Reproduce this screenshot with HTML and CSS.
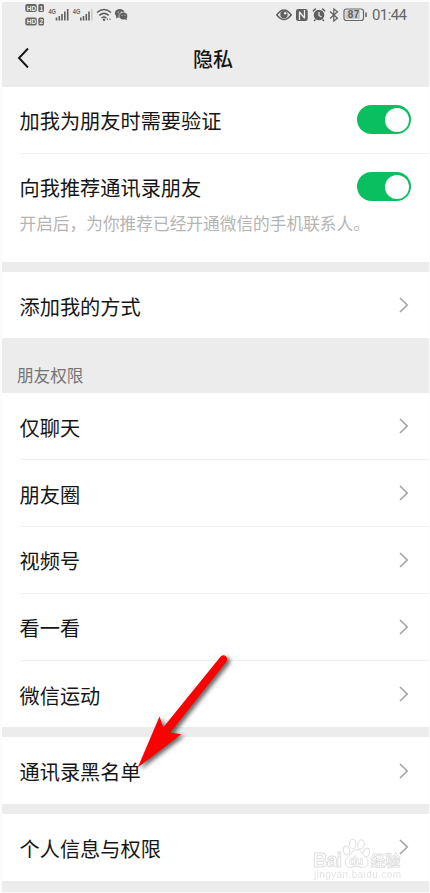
FILE: index.html
```html
<!DOCTYPE html>
<html lang="zh-CN">
<head>
<meta charset="utf-8">
<title>隐私</title>
<link rel="stylesheet" href="styles.css">
</head>
<body>
<svg class="defs" width="0" height="0"><defs>
<symbol id="chevron" viewBox="0 0 10 16"><path d="M1 1l7.200 7L1 15" fill="none" stroke="#a6a6a6" stroke-width="1.700"/></symbol>
</defs></svg>
<main class="screen">
  <header class="top">
    <div class="status">
      <svg width="106" height="24" viewBox="24 2 106 24">
        <g fill="#666">
          <rect x="25.300" y="4" width="11.500" height="8" rx="2"/><rect x="38.300" y="4" width="5.700" height="8" rx="1.500"/>
          <rect x="25.300" y="17.500" width="11.500" height="8" rx="2"/><rect x="38.300" y="17.500" width="5.700" height="8" rx="1.500"/>
        </g>
        <g class="hd" fill="#eee"><text x="26.700" y="10.500">HD</text><text x="39.500" y="10.500">1</text><text x="26.700" y="24">HD</text><text x="39.500" y="24">2</text></g>
        <g class="net" fill="#666"><text x="48.500" y="13.500" textLength="7.500" lengthAdjust="spacingAndGlyphs">4G</text><text x="72.800" y="13.500" textLength="7.500" lengthAdjust="spacingAndGlyphs">4G</text></g>
        <g stroke="#606060" stroke-width="1.600">
          <path d="M56.500 20.500v-3M59.300 20.500v-4.500M62 20.500v-6.500M64.800 20.500v-9M67.700 20.500V9"/>
          <path d="M80.800 20.500v-3M83.500 20.500v-4.500M86.300 20.500v-6.500M89 20.500v-9"/>
          <path d="M91.800 20.500V9" stroke="#ccc"/>
        </g>
        <g fill="none" stroke="#606060" stroke-width="1.600"><path d="M97 12.500q7-6 14 0M99.300 15.300q4.700-4 9.400 0M101.500 18q2.500-2 5 0"/></g>
        <circle cx="104" cy="19.700" r="1.200" fill="#606060"/>
        <path d="M108 18l-1.500 1.300 1.500 1.300zM109.500 18l1.500 1.300-1.500 1.300z" fill="#777"/>
        <g fill="#606060"><ellipse cx="119.800" cy="13.300" rx="4.900" ry="4.200"/><path d="M116.500 15.500l-.5 3 3-1.500z"/>
        <ellipse cx="123.300" cy="16" rx="4.400" ry="3.900" stroke="#ececec" stroke-width=".7"/><path d="M124 18.500l3 1.700-.5-3z"/></g>
        <g fill="#ececec"><circle cx="118.200" cy="12.200" r=".6"/><circle cx="121.300" cy="12.200" r=".6"/><circle cx="122" cy="15.300" r=".5"/><circle cx="125" cy="15.300" r=".5"/></g>
      </svg>
      <div class="status-right">
        <svg width="92" height="16" viewBox="276 7 92 16">
          <path d="M276.800 15Q284 5 291.200 15Q284 24 276.800 15Z" fill="none" stroke="#606060" stroke-width="1.500"/>
          <circle cx="284" cy="14.500" r="3.700" fill="#606060"/><circle cx="285.200" cy="13.300" r="1.300" fill="#eee"/>
          <rect x="296" y="9" width="11.700" height="12" rx="2.300" fill="#606060"/>
          <path d="M299.500 20v-8.500M299.500 12l5 6M304.500 10v8.500" fill="none" stroke="#eee" stroke-width="1.300"/>
          <circle cx="319" cy="15" r="5.300" fill="#606060"/><path d="M313 11.500q1-2 3-2.700M322 8.800q2 .7 3 2.700M315.500 19.500l-1.500 1.500M322.500 19.500l1.500 1.500" stroke="#606060" stroke-width="1.500" fill="none"/>
          <path d="M319 12v3.500l2.500 1.500" stroke="#eee" stroke-width="1.200" fill="none"/>
          <path d="M330 11.500l7.500 6.800-3.700 2.700V9l3.700 2.700-7.500 6.800" fill="none" stroke="#606060" stroke-width="1.200"/>
          <rect x="344" y="9" width="19.500" height="11.500" rx="2.500" fill="#eee" stroke="#686868" stroke-width="1.200"/>
          <rect x="345.500" y="10.500" width="14.500" height="8.500" rx="1" fill="#c8c8c8"/>
          <path d="M366 12.500v4.500" stroke="#686868" stroke-width="1.600"/>
          <text class="battery" x="347.700" y="18.300" textLength="11.500">87</text>
        </svg>
        <span class="time">01:44</span>
      </div>
    </div>
    <div class="nav">
      <svg class="back" width="12" height="22" viewBox="0 0 12 22"><path d="M11 1.500L2 11l9 9.500" fill="none" stroke="#151515" stroke-width="1.900"/></svg>
      <h1>隐私</h1>
    </div>
  </header>

  <section class="group">
    <div class="row"><span>加我为朋友时需要验证</span><i class="switch"></i></div>
    <div class="row detail">
      <div class="line"><span>向我推荐通讯录朋友</span><i class="switch"></i></div>
      <p>开启后，为你推荐已经开通微信的手机联系人。</p>
    </div>
  </section>
  <section class="group">
    <div class="row"><span>添加我的方式</span><svg class="chev"><use href="#chevron"/></svg></div>
  </section>
  <h2>朋友权限</h2>
  <section class="group">
    <div class="row"><span>仅聊天</span><svg class="chev"><use href="#chevron"/></svg></div>
    <div class="row"><span>朋友圈</span><svg class="chev"><use href="#chevron"/></svg></div>
    <div class="row"><span>视频号</span><svg class="chev"><use href="#chevron"/></svg></div>
    <div class="row"><span>看一看</span><svg class="chev"><use href="#chevron"/></svg></div>
    <div class="row"><span>微信运动</span><svg class="chev"><use href="#chevron"/></svg></div>
  </section>
  <section class="group">
    <div class="row"><span>通讯录黑名单</span><svg class="chev"><use href="#chevron"/></svg></div>
  </section>
  <section class="group">
    <div class="row"><span>个人信息与权限</span><svg class="chev"><use href="#chevron"/></svg></div>
  </section>
</main>

<svg class="arrow" width="110" height="130" viewBox="130 648 110 130">
  <path d="M220.700 656.600Q223.500 654 226.300 656.800Q228.300 659 226.300 661.700L170.300 732.500L181.300 734.200L137.800 767.500L159.500 716.500L163.300 727.300Z" fill="#fe0000"/>
</svg>
<svg class="watermark" width="124" height="48" viewBox="308 836 124 48">
  <g fill="#fff" stroke="#d6d6d6" stroke-width="1">
    <text class="brand" x="313" y="867" textLength="29">Bai</text>
    <ellipse cx="346.500" cy="850.500" rx="3" ry="4.500" transform="rotate(-15 346.500 850.500)"/>
    <ellipse cx="352.700" cy="844" rx="3.200" ry="4.700"/>
    <ellipse cx="361" cy="844.500" rx="3.200" ry="4.700" transform="rotate(12 361 844.500)"/>
    <ellipse cx="366.300" cy="852.500" rx="3.200" ry="4.500" transform="rotate(20 366.300 852.500)"/>
    <path d="M356.500 849.500c4.500 0 5.500 4.500 8.500 7s3.500 5 2.500 8-4.500 3.500-7.500 2.500-4.500-1-7 0-6.500.5-7.500-2.500 0-5.500 3-8 4-7 8-7z"/>
    <text class="du" x="349" y="864.500" textLength="14">du</text>
    <text class="exp" x="370.500" y="865.500" textLength="30">经验</text>
  </g>
  <text class="url" x="314" y="878" textLength="87">jingyan.baidu.com</text>
</svg>
</body>
</html>
```
FILE: styles.css
```css
* { box-sizing: border-box; }
body {
  margin: 0;
  padding: 2px 1px 1px 2px;
  background: #fcfcfc;
  font-family: "Noto Sans CJK SC", sans-serif;
  color: #161616;
  position: relative;
  height: 893px;
  overflow: hidden;
}
.defs { position: absolute; }
.screen {
  height: 890px;
  background: #ececec;
  display: flex;
  flex-direction: column;
}
.top { height: 85px; }
.status {
  display: flex;
  justify-content: space-between;
  align-items: flex-start;
  height: 27px;
  padding: 0 23px 0 22px;
}
.status svg { display: block; }
.status-right { display: flex; align-items: center; gap: 4px; height: 26px; }
.status text { font-family: "Liberation Sans", sans-serif; font-weight: bold; }
.hd text { font-size: 6.5px; }
.net text { font-size: 7.5px; }
.status .battery { font-size: 10px; fill: #606060; }
.time {
  font: 15px/28px Roboto, sans-serif;
  color: #666;
  width: 34px;
  letter-spacing: -.6px;
  white-space: nowrap;
}
.nav { display: flex; align-items: center; height: 58px; padding-left: 15px; }
.back { width: 12px; flex: none; margin-bottom: 1px; }
h1 {
  flex: 1;
  margin: 2px 32px 0 0;
  text-align: center;
  font-size: 20px;
  line-height: 30px;
  font-weight: 500;
}
.group { background: #fff; padding-left: 18px; margin-bottom: 10px; }
.row {
  display: flex;
  align-items: center;
  justify-content: space-between;
  height: 66.8px;
  padding-right: 18px;
  font-size: 20.2px;
  border-bottom: 1px solid #f0f0f0;
}
.row span { margin: 2px 0 0 -.5px; }
.row:last-child { border-bottom: 0; height: 66.7px; }
.row:last-child.detail { display: block; height: 108px; }
.line { display: flex; align-items: center; justify-content: space-between; height: 66px; }
.row p { margin: -9px 0 0 -.5px; font-size: 16.7px; line-height: 24px; color: #b4b4b4; white-space: nowrap; }
.switch {
  width: 54px;
  height: 29px;
  border-radius: 15px;
  background: #0abf60;
  padding: 2.5px;
}
.switch::after {
  content: "";
  display: block;
  width: 24px;
  height: 24px;
  border-radius: 50%;
  background: #fff;
  margin-left: auto;
}
.chev { width: 10px; height: 16px; margin-right: 2px; }
h2 {
  margin: -10px 0 0;
  height: 55px;
  padding: 25px 0 0 15px;
  font-size: 16.6px;
  line-height: 25px;
  font-weight: 400;
  color: #757575;
}
.arrow {
  position: absolute;
  left: 130px;
  top: 648px;
  filter: drop-shadow(3px 2px 2px rgba(0, 0, 0, .6));
}
.watermark { position: absolute; left: 308px; top: 836px; opacity: .8; }
.watermark text { font-family: "Liberation Sans", "Noto Sans CJK SC", sans-serif; font-weight: bold; }
.watermark .brand { font-size: 20px; }
.watermark .du { font-size: 12px; stroke-width: .7; }
.watermark .exp { font-size: 15px; stroke-width: .8; }
.watermark .url { font-size: 10px; font-weight: normal; fill: #dedede; }
```
